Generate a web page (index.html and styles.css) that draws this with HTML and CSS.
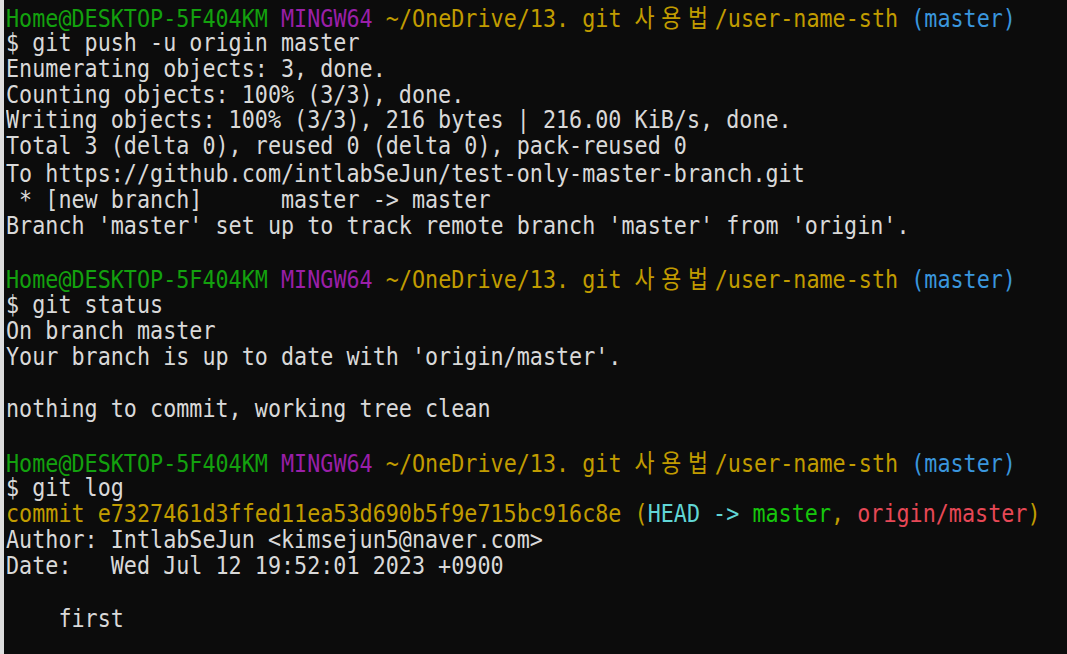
FILE: index.html
```html
<!DOCTYPE html>
<html lang="ko">

  <head>
    <meta charset="UTF-8">
    <meta name="viewport" content="width=device-width, initial-scale=1.0">
    <title>MINGW64 - git</title>
    <link rel="stylesheet" href="styles.css">
  </head>

  <body>
    <div class="term">
      <div class="line"><span class="user">Home@DESKTOP-5F404KM</span> <span class="sys">MINGW64</span> <span class="path">~/OneDrive/13. git <span class="wide">사용법</span>/user-name-sth</span> <span class="branch">(master)</span></div>
      <div class="line">$ git push -u origin master</div>
      <div class="line">Enumerating objects: 3, done.</div>
      <div class="line">Counting objects: 100% (3/3), done.</div>
      <div class="line">Writing objects: 100% (3/3), 216 bytes | 216.00 KiB/s, done.</div>
      <div class="line">Total 3 (delta 0), reused 0 (delta 0), pack-reused 0</div>
      <div class="line">To https://github.com/intlabSeJun/test-only-master-branch.git</div>
      <div class="line"> * [new branch]      master -&gt; master</div>
      <div class="line">Branch 'master' set up to track remote branch 'master' from 'origin'.</div>
      <div class="line"> </div>
      <div class="line"><span class="user">Home@DESKTOP-5F404KM</span> <span class="sys">MINGW64</span> <span class="path">~/OneDrive/13. git <span class="wide">사용법</span>/user-name-sth</span> <span class="branch">(master)</span></div>
      <div class="line">$ git status</div>
      <div class="line">On branch master</div>
      <div class="line">Your branch is up to date with 'origin/master'.</div>
      <div class="line"> </div>
      <div class="line">nothing to commit, working tree clean</div>
      <div class="line"> </div>
      <div class="line"><span class="user">Home@DESKTOP-5F404KM</span> <span class="sys">MINGW64</span> <span class="path">~/OneDrive/13. git <span class="wide">사용법</span>/user-name-sth</span> <span class="branch">(master)</span></div>
      <div class="line">$ git log</div>
      <div class="line"><span class="path">commit e7327461d3ffed11ea53d690b5f9e715bc916c8e (<span class="head">HEAD -&gt; </span><span class="local">master</span>, <span class="remote">origin/master</span>)</span></div>
      <div class="line">Author: IntlabSeJun &lt;kimsejun5@naver.com&gt;</div>
      <div class="line">Date:   Wed Jul 12 19:52:01 2023 +0900</div>
      <div class="line"> </div>
      <div class="line">    first</div>
    </div>
  </body>

</html>
```

FILE: styles.css
```css
html,
body {
  height: 100%;
}

body {
  margin: 0;
  overflow: hidden;
  background-color: #0c0c0c;
  border-left: 4px solid #dedede;
}

.term {
  padding: 2.5px 0 0 2px;
  color: #d9d9d9;
  font-family: "DejaVu Sans Mono", "Noto Sans CJK KR", monospace;
  font-size: 21.75px;
  line-height: 23.19px;
  transform: scaleY(1.13);
  transform-origin: 0 2.5px;
}

.line {
  white-space: pre;
  height: 23.19px;
}

.wide {
  font-family: "Noto Sans CJK KR", sans-serif;
  letter-spacing: 6.7px;
}

.user { color: #13a10e; }
.sys { color: #9a1fa8; }
.path { color: #c19c00; }
.branch { color: #3a96dd; }
.head { color: #61d6d6; }
.local { color: #16c60c; }
.remote { color: #e74856; }
```
